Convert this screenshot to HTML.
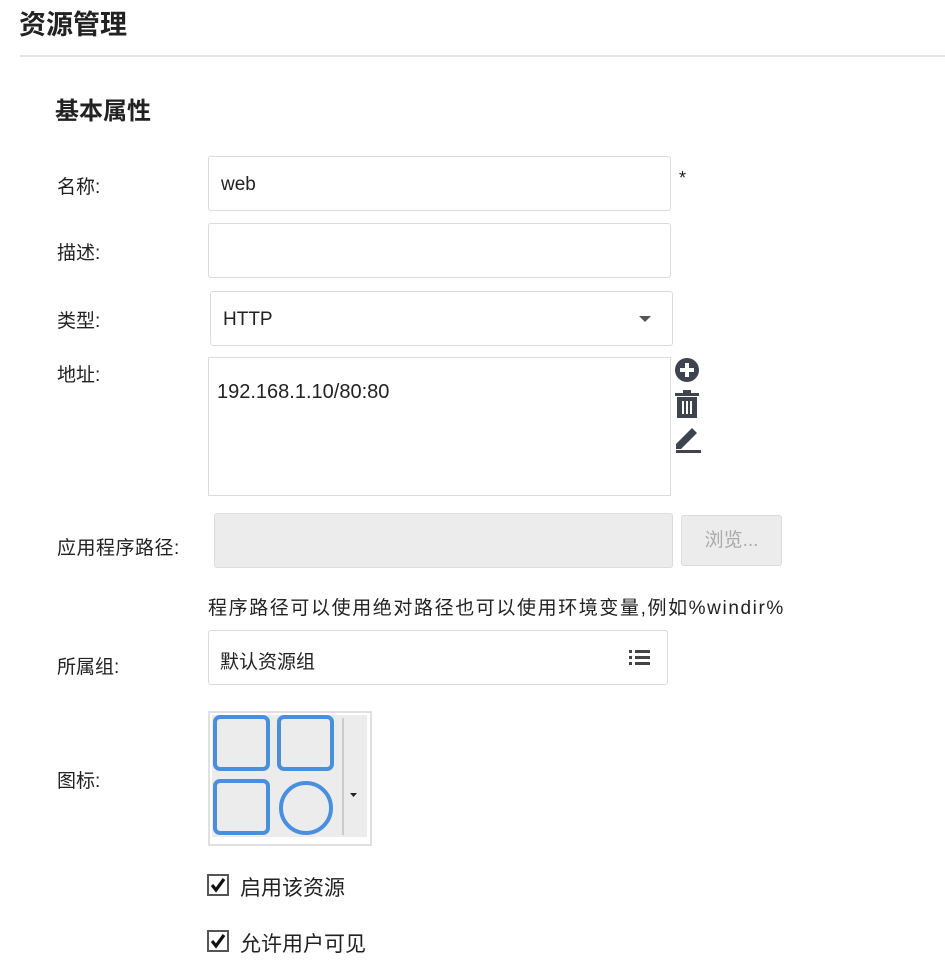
<!DOCTYPE html><html><head><meta charset="utf-8"><style>
body{margin:0;width:945px;height:976px;background:#fff;font-family:"Liberation Sans","Noto Sans CJK SC",sans-serif;color:#222;position:relative;overflow:hidden}
.a{position:absolute}
.lbl{position:absolute;left:57px;font-size:19px}
.box{position:absolute;border:1px solid #dcdcdc;border-radius:3px;background:#fff;box-sizing:border-box}
.cb{position:absolute;left:207px;width:22px;height:22px;border:2px solid #555;box-sizing:border-box}
</style></head><body>
<div class="a" style="left:19px;top:3px;font-size:27px;font-weight:bold">资源管理</div>
<div class="a" style="left:20px;top:55px;width:925px;height:2px;background:#e3e3e8"></div>
<div class="a" style="left:55px;top:91px;font-size:24px;font-weight:bold">基本属性</div>

<div class="lbl" style="top:172px">名称:</div>
<div class="box" style="left:208px;top:156px;width:463px;height:55px"><span class="a" style="left:12px;top:17px;font-size:19px">web</span></div>
<div class="a" style="left:679px;top:168px;font-size:18px">*</div>

<div class="lbl" style="top:238px">描述:</div>
<div class="box" style="left:208px;top:223px;width:463px;height:55px"></div>

<div class="lbl" style="top:306px">类型:</div>
<div class="box" style="left:210px;top:291px;width:463px;height:55px"><span class="a" style="left:12px;top:17px;font-size:19px">HTTP</span>
<span class="a" style="left:428px;top:24px;border-left:6px solid transparent;border-right:6px solid transparent;border-top:6px solid #555"></span></div>

<div class="lbl" style="top:360px">地址:</div>
<div class="box" style="left:208px;top:357px;width:463px;height:139px;border-radius:0"><span class="a" style="left:8px;top:23px;font-size:20px">192.168.1.10/80:80</span></div>
<svg class="a" style="left:673px;top:357px" width="32" height="100" viewBox="0 0 32 100">
<circle cx="14" cy="13" r="12" fill="#3d4450"/><rect x="7" y="11" width="14" height="4" fill="#fff"/><rect x="12" y="6" width="4" height="14" fill="#fff"/>
<rect x="2" y="36" width="24" height="3" fill="#3d4450"/><rect x="10" y="33" width="8" height="3" fill="#3d4450"/>
<path d="M4 40h20v21H4z" fill="#3d4450"/><rect x="9" y="44" width="2" height="13" fill="#fff"/><rect x="13" y="44" width="2" height="13" fill="#fff"/><rect x="17" y="44" width="2" height="13" fill="#fff"/>
<path d="M3 92v-5l16-16 5 5-16 16z" fill="#3d4450"/><rect x="3" y="93" width="25" height="3" fill="#3d4450"/>
</svg>

<div class="lbl" style="top:533px;letter-spacing:0.5px">应用程序路径:</div>
<div class="box" style="left:214px;top:513px;width:459px;height:55px;background:#ececec"></div>
<div class="box" style="left:681px;top:515px;width:101px;height:51px;background:#ececec;color:#aaa;font-size:19px;text-align:center;line-height:50px">浏览...</div>
<div class="a" style="left:208px;top:593px;font-size:19px;letter-spacing:1.6px">程序路径可以使用绝对路径也可以使用环境变量,例如%windir%</div>

<div class="lbl" style="top:652px">所属组:</div>
<div class="box" style="left:208px;top:630px;width:460px;height:55px"><span class="a" style="left:11px;top:16px;font-size:19px">默认资源组</span>
<svg class="a" style="left:420px;top:18px" width="22" height="18"><g fill="#444"><rect x="0" y="1" width="3" height="3"/><rect x="6" y="1" width="15" height="3"/><rect x="0" y="7" width="3" height="3"/><rect x="6" y="7" width="15" height="3"/><rect x="0" y="13" width="3" height="3"/><rect x="6" y="13" width="15" height="3"/></g></svg></div>

<div class="lbl" style="top:766px">图标:</div>
<div class="a" style="left:208px;top:711px;width:160px;height:131px;border:2px solid #e0e0e0;background:#fff"></div>
<div class="a" style="left:212px;top:715px;width:155px;height:122px;background:#ececec"></div>
<svg class="a" style="left:212px;top:715px" width="155" height="122">
<g fill="none" stroke="#4a8ee0" stroke-width="4">
<rect x="3" y="2" width="53" height="52" rx="5"/><rect x="67" y="2" width="53" height="52" rx="5"/>
<rect x="3" y="66" width="53" height="52" rx="5"/><circle cx="94" cy="93" r="25"/></g>
<rect x="130" y="3" width="2" height="117" fill="#ccc"/>
<path d="M138 78h7l-3.5 4z" fill="#222"/></svg>

<div class="cb" style="top:874px"></div>
<svg class="a" style="left:209px;top:876px" width="18" height="18"><path d="M3 9l4 5 8-11" stroke="#111" stroke-width="3.2" fill="none"/></svg>
<div class="a" style="left:240px;top:872px;font-size:21px">启用该资源</div>
<div class="cb" style="top:930px"></div>
<svg class="a" style="left:209px;top:932px" width="18" height="18"><path d="M3 9l4 5 8-11" stroke="#111" stroke-width="3.2" fill="none"/></svg>
<div class="a" style="left:240px;top:928px;font-size:21px">允许用户可见</div>
</body></html>
